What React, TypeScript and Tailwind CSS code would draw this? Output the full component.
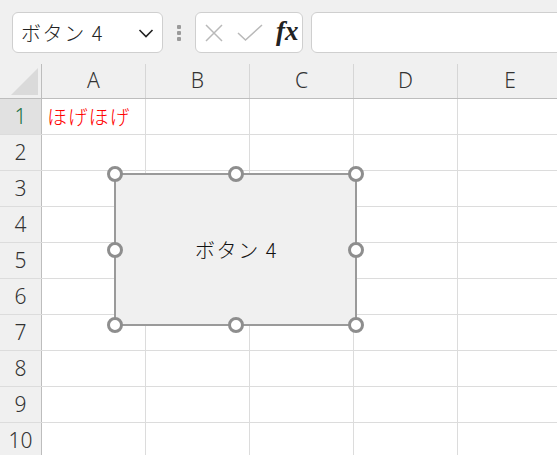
import React from "react";

const cols = ["A", "B", "C", "D", "E"];
const rows = [1, 2, 3, 4, 5, 6, 7, 8, 9, 10];

const handles: [number, number][] = [
  [115, 110],
  [235.5, 110],
  [356, 110],
  [115, 185.5],
  [356, 185.5],
  [115, 261],
  [235.5, 261],
  [356, 261],
];

export default function App() {
  return (
    <div
      className="w-[557px] h-[455px] overflow-hidden bg-white relative"
      style={{ fontFamily: '"Noto Sans", "Noto Sans CJK JP", sans-serif' }}
    >
      {/* Toolbar */}
      <div className="h-[64px] bg-[#f0f0f0] flex items-start pt-[12px] pl-[12px] overflow-hidden">
        <div className="w-[151px] h-[41px] shrink-0 bg-white border border-[#cfcfcf] rounded-[6px] flex items-center pl-[8px] pr-[4px]">
          <span
            className="flex-1 text-[20px] font-light tracking-[1.6px] text-[#222] leading-none"
            style={{ fontFamily: '"Noto Sans CJK JP", sans-serif' }}
          >
            ボタン 4
          </span>
          <svg width="20" height="20" viewBox="0 0 20 20" className="mr-[2px]">
            <path d="M3.5 7 L10 13.5 L16.5 7" fill="none" stroke="#222" strokeWidth="1.6" />
          </svg>
        </div>
        <div className="w-[32px] h-[41px] shrink-0 flex flex-col items-center justify-center gap-[2px]">
          <div className="w-[4px] h-[4px] bg-[#9a9a9a] rounded-[1px]" />
          <div className="w-[4px] h-[4px] bg-[#9a9a9a] rounded-[1px]" />
          <div className="w-[4px] h-[4px] bg-[#9a9a9a] rounded-[1px]" />
        </div>
        <div className="w-[108px] h-[41px] shrink-0 bg-white border border-[#cfcfcf] rounded-[6px] flex items-center pl-[8px]">
          <svg width="20" height="20" viewBox="0 0 20 20">
            <path d="M2 2 L18 18 M18 2 L2 18" stroke="#b9b9b9" strokeWidth="1.5" />
          </svg>
          <svg width="26" height="20" viewBox="0 0 26 20" className="ml-[13px]">
            <path d="M1 10 L8.5 17 L25 2" fill="none" stroke="#b9b9b9" strokeWidth="1.5" />
          </svg>
          <span
            className="ml-[13px] text-[27px] italic font-bold text-[#222] leading-none pb-[2px]"
            style={{ fontFamily: '"Liberation Serif", serif' }}
          >
            fx
          </span>
        </div>
        <div className="w-[300px] h-[41px] shrink-0 ml-[8px] bg-white border border-[#cfcfcf] rounded-[6px]" />
      </div>

      {/* Sheet */}
      <div className="relative">
        {/* Header row */}
        <div className="flex h-[35px] bg-[#f0f0f0] border-b border-[#bdbdbd]">
          <div className="w-[42px] shrink-0 relative border-r border-[#bdbdbd] flex items-end justify-end pb-[3px] pr-[3px]">
            <svg width="27" height="27" viewBox="0 0 27 27">
              <path d="M27 0 L27 27 L0 27 Z" fill="#dadada" />
            </svg>
          </div>
          {cols.map((c, i) => (
            <div
              key={c}
              className={`w-[104px] shrink-0 flex items-center justify-center text-[21px] font-light text-[#333] ${
                i < 4 ? "border-r border-[#d6d6d6]" : ""
              }`}
            >
              {c}
            </div>
          ))}
        </div>
        {/* Rows */}
        {rows.map((r) => (
          <div key={r} className="flex h-[36px] border-b border-[#dcdcdc]">
            <div
              className={`w-[42px] shrink-0 border-r border-[#bdbdbd] flex items-center justify-center text-[21px] font-light ${
                r === 1 ? "bg-[#e1e1e1] text-[#217346]" : "bg-[#f0f0f0] text-[#333]"
              }`}
            >
              {r}
            </div>
            {cols.map((c, i) => (
              <div
                key={c}
                className={`w-[104px] shrink-0 flex items-center pl-[5px] ${
                  i < 4 ? "border-r border-[#dcdcdc]" : ""
                }`}
              >
                {r === 1 && c === "A" ? (
                  <span
                    className="text-[20px] font-light tracking-[0.8px] text-[#ff0000] leading-none"
                    style={{ fontFamily: '"Noto Sans CJK JP", sans-serif' }}
                  >
                    ほげほげ
                  </span>
                ) : null}
              </div>
            ))}
          </div>
        ))}

        {/* Button shape overlay */}
        <div className="absolute left-[114px] top-[109px] w-[243px] h-[153px] bg-[#f0f0f0] border-2 border-[#9a9a9a] flex items-center justify-center">
          <span
            className="text-[20px] font-light tracking-[1.6px] text-[#111] leading-none pl-[2px]"
            style={{ fontFamily: '"Noto Sans CJK JP", sans-serif' }}
          >
            ボタン 4
          </span>
        </div>
        {handles.map(([x, y], i) => (
          <div
            key={i}
            className="absolute w-[16px] h-[16px] rounded-full bg-white border-[3px] border-[#8e8e8e]"
            style={{ left: x - 8, top: y - 8 }}
          />
        ))}
      </div>
    </div>
  );
}
